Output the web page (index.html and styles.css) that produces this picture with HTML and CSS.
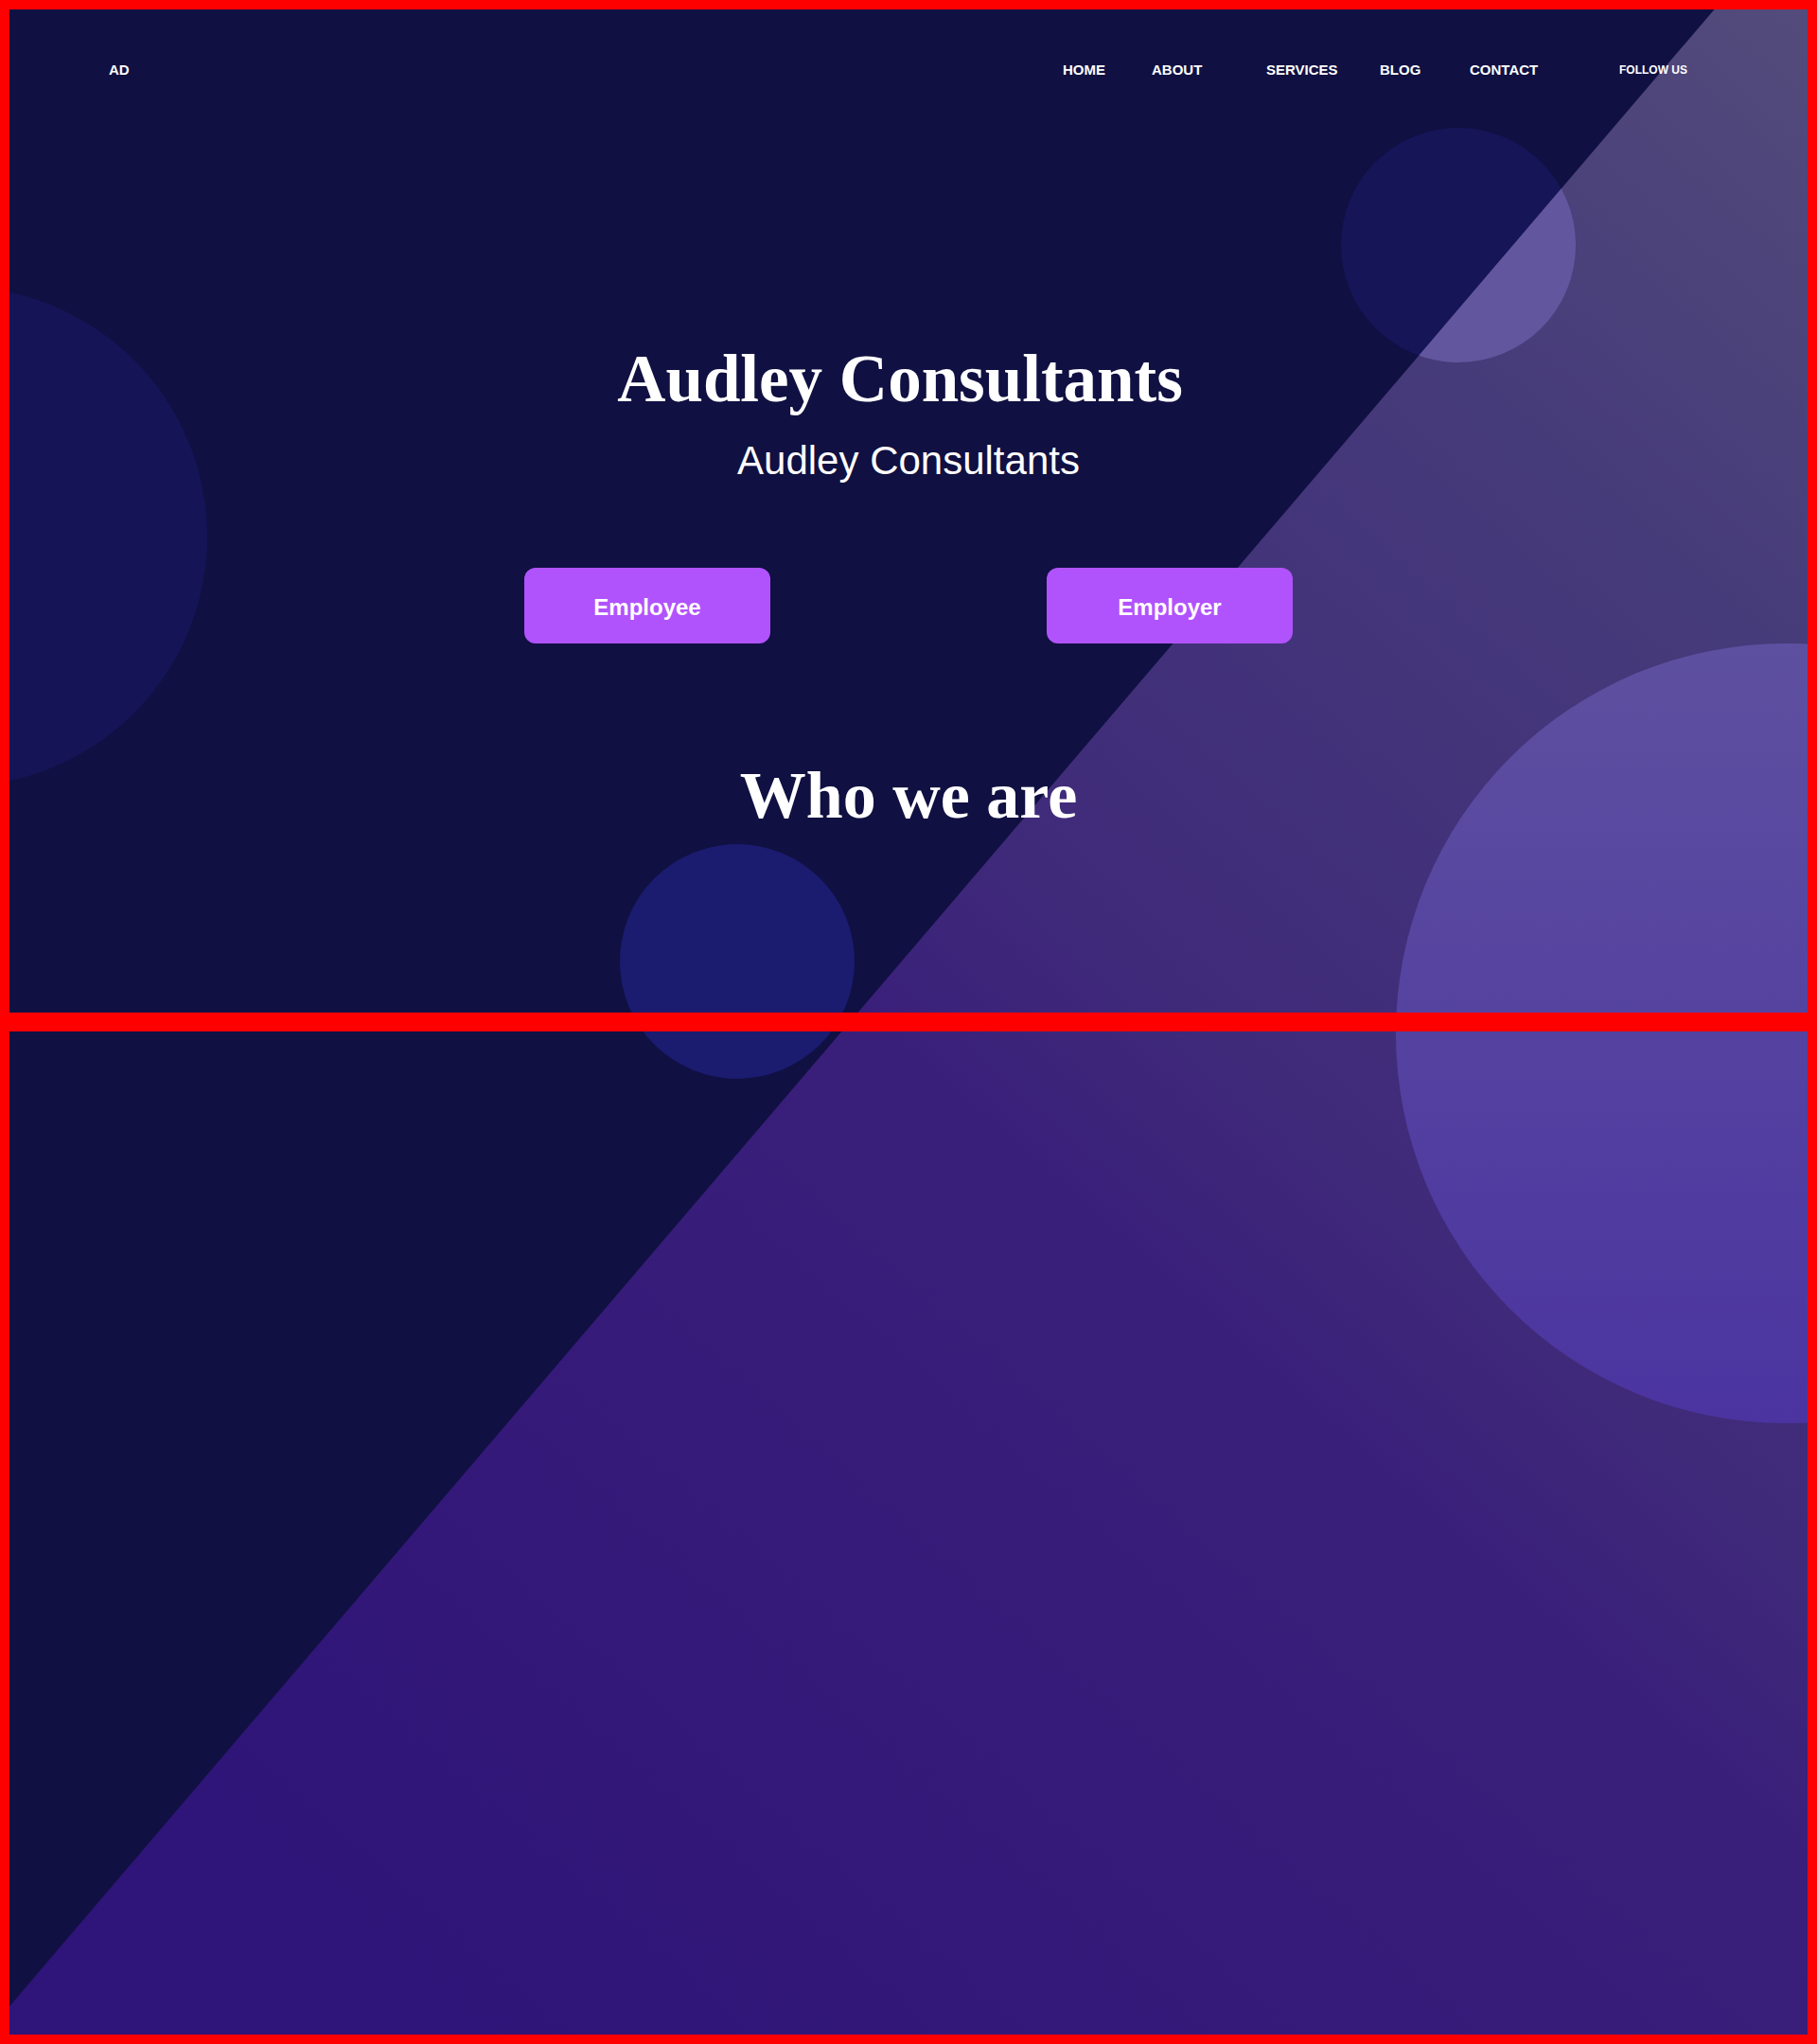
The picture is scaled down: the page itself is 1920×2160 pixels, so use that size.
FILE: index.html
```html
<!DOCTYPE html>
<html lang="en">

<head>
    <meta charset="UTF-8">
    <meta name="viewport" content="width=device-width, initial-scale=1.0">
    <title>Audley Consultants</title>
    <link rel="stylesheet" href="styles.css">
</head>

<body>
    <div class="page">
        <svg class="backdrop" width="1920" height="2160" viewBox="0 0 1920 2160" aria-hidden="true">
            <defs>
                <linearGradient id="slopeFill" gradientUnits="userSpaceOnUse" x1="1920" y1="0" x2="0" y2="2160">
                    <stop offset="0" stop-color="#534c7b" />
                    <stop offset="0.19" stop-color="#463b7a" />
                    <stop offset="0.43" stop-color="#3f2a7a" />
                    <stop offset="0.51" stop-color="#3a1f7a" />
                    <stop offset="0.9" stop-color="#2f1479" />
                </linearGradient>
                <linearGradient id="discFill" x1="0" y1="0" x2="0" y2="1">
                    <stop offset="0" stop-color="#5e50a0" />
                    <stop offset="1" stop-color="#4b34a0" />
                </linearGradient>
                <clipPath id="slopeClip">
                    <polygon points="1820,0 1920,0 1920,2160 -24,2160" />
                </clipPath>
            </defs>
            <circle cx="-45" cy="567" r="264" fill="#151456" />
            <circle cx="779" cy="1016" r="124" fill="#1b1b70" />
            <circle cx="1541" cy="259" r="124" fill="#161558" />
            <polygon points="1820,0 1920,0 1920,2160 -24,2160" fill="url(#slopeFill)" />
            <circle cx="1541" cy="259" r="124" fill="#62579e" clip-path="url(#slopeClip)" />
            <circle cx="1887" cy="1092" r="412" fill="url(#discFill)" />
        </svg>

        <section class="frame hero">
            <header class="topbar">
                <div class="brand">AD</div>
                <nav class="menu">
                    <a href="#">HOME</a>
                    <a href="#">ABOUT</a>
                    <a href="#">SERVICES</a>
                    <a href="#">BLOG</a>
                    <a href="#">CONTACT</a>
                    <a href="#" class="follow">FOLLOW US</a>
                </nav>
            </header>
            <h1 class="title">Audley Consultants</h1>
            <p class="tagline">Audley Consultants</p>
            <div class="choices">
                <button class="choice">Employee</button>
                <button class="choice">Employer</button>
            </div>
            <h2 class="who">Who we are</h2>
        </section>

        <section class="frame lower"></section>
    </div>
</body>

</html>
```

FILE: styles.css
```css
body {
    margin: 0;
    background: #101042;
    color: #fff;
    font-family: "Liberation Sans", Arial, sans-serif;
}

.page {
    position: relative;
    width: 1920px;
}

.backdrop {
    position: absolute;
    top: 0;
    left: 0;
    z-index: 0;
    display: block;
}

.frame {
    position: relative;
    z-index: 1;
    height: 1080px;
    border: 10px solid #f00;
    box-sizing: border-box;
}

.hero {
    display: flex;
    flex-direction: column;
    align-items: center;
}

.topbar {
    align-self: stretch;
    height: 126px;
    display: flex;
    align-items: center;
    justify-content: space-between;
    padding: 0 127px 0 105px;
}

.brand {
    font-size: 15px;
    font-weight: 700;
}

.menu {
    display: grid;
    grid-template-columns: 94px 121px 120px 95px 158px auto;
    align-items: center;
}

.menu a {
    color: #fff;
    text-decoration: none;
    font-size: 15px;
    font-weight: 700;
}

.menu .follow {
    padding-top: 2px;
    font-size: 12px;
}

.title {
    margin: 229px 18px 0 0;
    font: 700 71px/1 "Liberation Serif", "Times New Roman", serif;
}

.tagline {
    margin: 30px 0 0;
    font-size: 42px;
    line-height: 1;
}

.choices {
    margin-top: 92px;
    display: flex;
    gap: 292px;
}

.choice {
    width: 260px;
    height: 80px;
    padding-top: 4px;
    border: 0;
    border-radius: 12px;
    background: #b153fd;
    color: #fff;
    font: 700 24px "Liberation Sans", Arial, sans-serif;
}

.who {
    margin: 126px 0 0;
    font: 700 70px/1 "Liberation Serif", "Times New Roman", serif;
}
```
